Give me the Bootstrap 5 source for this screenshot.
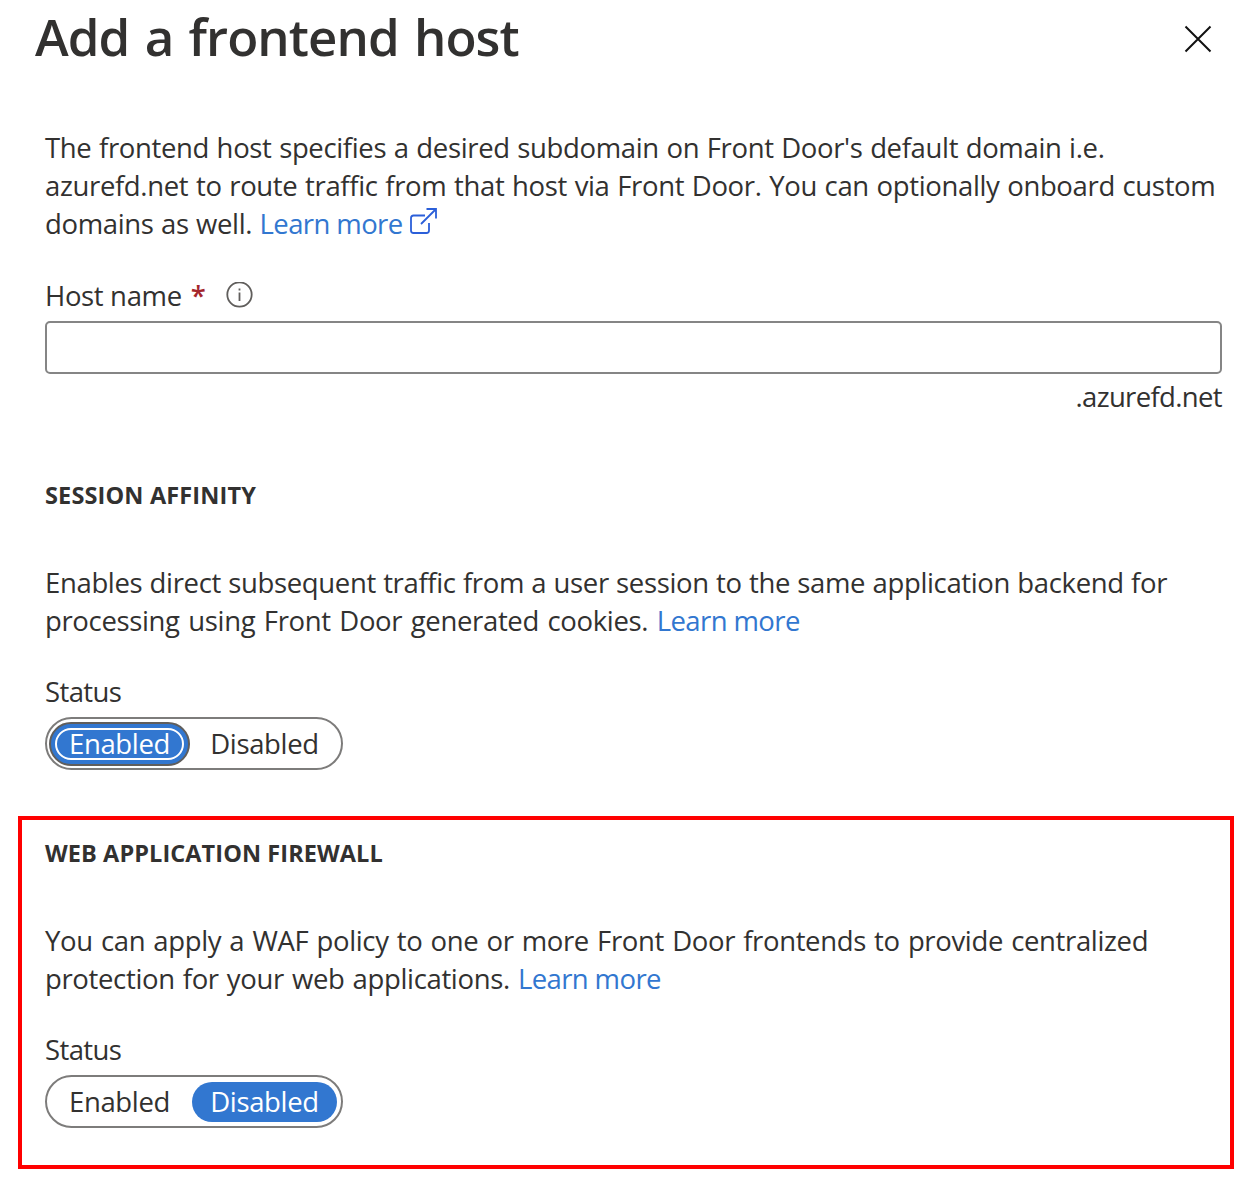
<!DOCTYPE html>
<html lang="en">
<head>
<meta charset="utf-8">
<meta name="viewport" content="width=device-width, initial-scale=1">
<title>Add a frontend host</title>
<link href="https://cdn.jsdelivr.net/npm/bootstrap@5.3.0/dist/css/bootstrap.min.css" rel="stylesheet">
<style>
body{font-family:"Open Sans","Noto Sans",sans-serif;font-size:27.5px;line-height:38px;color:#323130;background:#fff;letter-spacing:-.35px}
.panel-head{height:129px;padding:0 48px 0 35px}
.panel-title{font-size:51px;font-weight:600;line-height:72px;letter-spacing:-.95px;word-spacing:3px}
.close-btn{width:28px;height:28px;margin-top:25px;color:#111}
.panel-body{padding:0 38px 0 45px}
.text-line{display:block;white-space:nowrap}
a{color:#3277d0;text-decoration:none;letter-spacing:-.6px;word-spacing:0}
.l1{word-spacing:.8px}
.l2{word-spacing:.88px}
.l3{word-spacing:.6px}
.l6{word-spacing:.5px}
.l7{word-spacing:1.8px}
.l9{word-spacing:1.35px}
.l10{word-spacing:1.3px}
.ext-icon{vertical-align:-1px}
.host-label{margin-top:34px}
.required-mark{color:#a4262c;font-weight:600;margin-left:9px}
.info-icon{margin-left:20px}
.host-input{height:53px;border:2px solid #858585;border-radius:5px;margin-top:6px}
.domain-suffix{margin-top:4px;letter-spacing:-.65px}
.session-block{padding-top:60px}
.group-title{font-size:23.5px;font-weight:700;line-height:38px;margin:0 0 50px;letter-spacing:.15px}
.waf-box .group-title{letter-spacing:.08px}
.status-label{margin-top:33px;letter-spacing:-.6px}
.toggle-group{width:298px;height:53px;border:2px solid #7d7c7b;border-radius:27px;margin-top:6px;padding:3px 2px}
.toggle-option{height:40px;border:0;border-radius:22px;background:none;color:inherit;padding:0;letter-spacing:inherit;line-height:40px;margin-top:2px}
.opt-enabled{width:141px}
.opt-disabled{width:145px;margin-left:2px}
.toggle-option.selected{background:#3277d0;color:#fff}
.toggle-option.focused{height:44px;margin-top:0;border:2px solid #605e5c;position:relative}
.toggle-option.focused::after{content:"";position:absolute;inset:4px;border:2px solid #fff;border-radius:20px}
.waf-box{margin:46px 26px 0 18px;height:353px;border:4px solid #f00;padding:14px 0 0 23px}
</style>
</head>
<body>
<header class="panel-head d-flex justify-content-between align-items-start">
<h1 class="panel-title m-0">Add a frontend host</h1>
<svg class="close-btn" viewBox="0 0 28 28" fill="none" stroke="currentColor" stroke-width="2" role="img" aria-label="Close"><path d="M1.5 1.5 26.5 26.5M26.5 1.5 1.5 26.5"/></svg>
</header>
<main>
<section class="panel-body">
<p class="m-0"><span class="text-line l1">The frontend host specifies a desired subdomain on Front Door's default domain i.e.</span>
<span class="text-line l2">azurefd.net to route traffic from that host via Front Door. You can optionally onboard custom</span>
<span class="text-line l3">domains as well. <a href="#">Learn more <svg width="28" height="28" viewBox="0 0 28 28" fill="none" stroke="#2b5fd9" stroke-width="1.8" class="ext-icon"><path d="M16 8.5H4.500Q2 8.500 2 11V23.500Q2 26 4.500 26H17.500Q20 26 20 23.500V16M12 17 26.500 2.500M17.500 2H27V11.500"/></svg></a></span></p>
<div class="host-label d-flex align-items-center"><label for="host">Host name</label><span class="required-mark">*</span>
<svg class="info-icon" width="28" height="28" viewBox="0 0 28 28" fill="none" stroke="#605e5c" stroke-width="1.8"><circle cx="13.5" cy="12.500" r="12.200"/><path d="M13.5 10.500V19M13.500 6.500V8.500"/></svg></div>
<input id="host" type="text" class="host-input d-block w-100">
<div class="text-end domain-suffix">.azurefd.net</div>
</section>
<section class="panel-body session-block">
<h2 class="group-title">SESSION AFFINITY</h2>
<p class="m-0"><span class="text-line l6">Enables direct subsequent traffic from a user session to the same application backend for</span>
<span class="text-line l7">processing using Front Door generated cookies. <a href="#">Learn more</a></span></p>
<div class="status-label">Status</div>
<div class="toggle-group d-flex"><button class="toggle-option opt-enabled selected focused">Enabled</button><button class="toggle-option opt-disabled">Disabled</button></div>
</section>
<section class="waf-box">
<h2 class="group-title">WEB APPLICATION FIREWALL</h2>
<p class="m-0"><span class="text-line l9">You can apply a WAF policy to one or more Front Door frontends to provide centralized</span>
<span class="text-line l10">protection for your web applications. <a href="#">Learn more</a></span></p>
<div class="status-label">Status</div>
<div class="toggle-group d-flex"><button class="toggle-option opt-enabled">Enabled</button><button class="toggle-option opt-disabled selected">Disabled</button></div>
</section>
</main>
<script src="https://cdn.jsdelivr.net/npm/bootstrap@5.3.0/dist/js/bootstrap.bundle.min.js"></script>
</body>
</html>
